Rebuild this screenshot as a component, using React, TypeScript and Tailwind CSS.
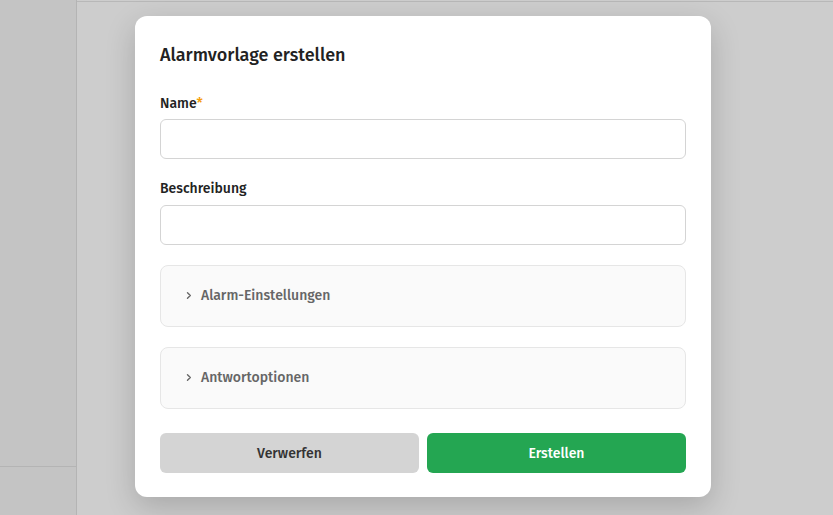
import React from 'react'

const font = { fontFamily: '"Fira Sans", Roboto, "Noto Sans", sans-serif' }

function Chevron() {
  return (
    <svg width="8" height="9" viewBox="0 0 8 9" fill="none" className="text-[#666]">
      <path d="M2.5 1.8 5.3 4.5 2.5 7.2" stroke="currentColor" strokeWidth="1.4" strokeLinecap="round" strokeLinejoin="round" />
    </svg>
  )
}

function Section({ title }: { title: string }) {
  return (
    <div className="h-[62px] rounded-lg border border-[#e6e6e6] bg-[#fafafa] flex items-center pl-[24px] gap-[8px] pb-[1px]">
      <Chevron />
      <span className="text-[14px] font-medium text-[#666]">{title}</span>
    </div>
  )
}

export default function App() {
  return (
    <div className="relative h-[515px] w-[833px] overflow-hidden flex bg-[#cdcdcd]" style={font}>
      {/* background app, dimmed */}
      <aside className="w-[77px] h-full bg-[#c4c4c4] border-r border-[#b4b4b4] flex flex-col">
        <div className="flex-1" />
        <div className="h-[49px] border-t border-[#b4b4b4]" />
      </aside>
      <main className="flex-1 h-full">
        <div className="h-[2px] border-b border-[#b8b8b8]" />
      </main>

      {/* modal */}
      <div className="absolute inset-0 flex items-start pt-[16px] pl-[135px]">
        <div className="w-[576px] h-[481px] bg-white rounded-xl shadow-[0_10px_30px_rgba(0,0,0,0.18)] px-[25px] pt-[25px]">
          <h2 className="text-[18px] leading-[28px] font-medium text-[#222]">Alarmvorlage erstellen</h2>

          <label className="block mt-[25px] mb-[5px] text-[14px] leading-[20px] font-medium text-[#222]">
            Name<span className="text-[#f59e0b]">*</span>
          </label>
          <input className="block w-full h-[40px] rounded-md border border-[#d4d4d4] bg-white outline-none" />

          <label className="block mt-[20px] mb-[6px] text-[14px] leading-[20px] font-medium text-[#222]">
            Beschreibung
          </label>
          <input className="block w-full h-[40px] rounded-md border border-[#d4d4d4] bg-white outline-none" />

          <div className="mt-[20px] flex flex-col gap-[20px]">
            <Section title="Alarm-Einstellungen" />
            <Section title="Antwortoptionen" />
          </div>

          <div className="mt-[24px] flex gap-[8px]">
            <button className="flex-1 h-[40px] rounded-md bg-[#d4d4d4] text-[14px] font-medium text-[#333]">Verwerfen</button>
            <button className="flex-1 h-[40px] rounded-md bg-[#24a652] text-[14px] font-medium text-white">Erstellen</button>
          </div>
        </div>
      </div>
    </div>
  )
}
